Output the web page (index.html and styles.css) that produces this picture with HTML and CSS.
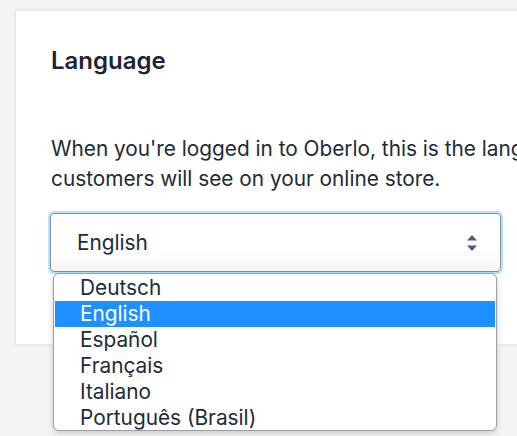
FILE: index.html
```html
<!DOCTYPE html>
<html lang="en">
<head>
<meta charset="utf-8">
<title>Language</title>
<link rel="stylesheet" href="styles.css">
</head>
<body>
<div class="page">
  <section class="card">
    <h2 class="title">Language</h2>
    <p class="desc"><span class="line">When you're logged in to Oberlo, this is the language you will see. It doesn't affect the language your</span><span class="line">customers will see on your online store.</span></p>
    <div class="select-wrap">
      <div class="select">
        <span class="select-value">English</span>
        <svg class="arrows" width="10" height="16" viewBox="0 0 10 16"><path d="M5 0 L10 5.5 H0 Z M5 16 L0 10.5 H10 Z" fill="#4d5b80"/></svg>
      </div>
      <ul class="menu">
        <li class="opt">Deutsch</li>
        <li class="opt selected">English</li>
        <li class="opt">Español</li>
        <li class="opt">Français</li>
        <li class="opt">Italiano</li>
        <li class="opt">Português (Brasil)</li>
      </ul>
    </div>
  </section>
</div>
</body>
</html>
```
FILE: styles.css
```css
html, body {
  margin: 0;
  padding: 0;
  overflow: hidden;
  height: 100%;
}
body {
  background: #f4f4f6;
  font-family: Inter, "Noto Sans", sans-serif;
  color: #212b36;
}
.page {
  padding: 10px 0 0 15px;
}
.card {
  width: 600px;
  height: 335px;
  box-sizing: border-box;
  background: #fff;
  border: 1px solid #e8e8ec;
  box-shadow: 0 0 4px rgba(0,0,0,0.06);
  padding: 36px 35px 0 35px;
}
.title {
  margin: 0;
  font-size: 24px;
  font-weight: 600;
  line-height: 28px;
  color: #1f2235;
}
.desc {
  margin: 59px 0 0 0;
  font-size: 20.8px;
  line-height: 30px;
  color: #212b36;
}
.line {
  display: block;
  white-space: nowrap;
}
.select-wrap {
  position: relative;
  margin-top: 19px;
}
.select {
  width: 451px;
  height: 59px;
  box-sizing: border-box;
  margin-left: -1px;
  border: 1px solid #8a8ca6;
  border-radius: 4px;
  box-shadow: 0 0 0 2px #aee6f7;
  background: linear-gradient(#ffffff 60%, #f6f6f7);
  display: flex;
  align-items: center;
  justify-content: space-between;
  padding: 0 23px 0 26px;
  font-size: 20.8px;
}
.arrows {
  display: block;
}
.menu {
  position: absolute;
  top: 60px;
  left: 2px;
  width: 444px;
  height: 158px;
  box-sizing: border-box;
  margin: 0;
  padding: 1px 1px;
  list-style: none;
  background: #fff;
  border: 1px solid #9e9e9e;
  border-radius: 6px;
  box-shadow: 0 2px 6px rgba(0,0,0,0.18);
  overflow: hidden;
}
.opt {
  height: 26px;
  line-height: 26px;
  padding-left: 25px;
  font-size: 20.8px;
  color: #212b36;
}
.opt.selected {
  background: #1e90ff;
  color: #fff;
}
```
